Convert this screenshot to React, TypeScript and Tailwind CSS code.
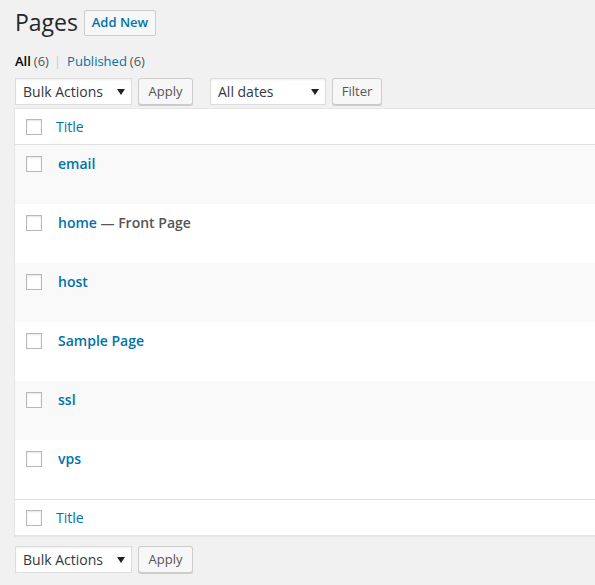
const pages = [
  { title: "email" },
  { title: "home", state: "Front Page" },
  { title: "host" },
  { title: "Sample Page" },
  { title: "ssl" },
  { title: "vps" },
];

function Checkbox() {
  return (
    <span className="block w-[16px] h-[16px] border border-[#b4b9be] bg-white shadow-[inset_0_1px_2px_rgba(0,0,0,0.1)]" />
  );
}

function Select({ label, width }: { label: string; width: string }) {
  return (
    <div
      className={`${width} h-[27px] flex items-center justify-between pl-[7px] pr-[6px] bg-white border border-[#ddd] shadow-[inset_0_1px_2px_rgba(0,0,0,0.07)] text-[14px] text-[#32373c]`}
    >
      <span>{label}</span>
      <svg width="8" height="6" viewBox="0 0 8 6">
        <path d="M0 0 L8 0 L4 6 Z" fill="#222" />
      </svg>
    </div>
  );
}

function Button({ label, width }: { label: string; width: string }) {
  return (
    <button
      className={`${width} h-[27px] flex items-center justify-center bg-[#f7f7f7] border border-[#ccc] rounded-[3px] shadow-[0_1px_0_#ccc] text-[13px] text-[#555]`}
    >
      {label}
    </button>
  );
}

export default function App() {
  return (
    <div className="w-[595px] h-[585px] overflow-hidden bg-[#f1f1f1] pl-[15px] pt-[8px] font-['Open_Sans',sans-serif] text-[#444]">
      {/* Heading */}
      <div className="flex items-center gap-[6px]">
        <h1 className="text-[23px] leading-[29px] text-[#23282d]">Pages</h1>
        <button className="h-[26px] w-[72px] flex items-center justify-center bg-[#f7f7f7] border border-[#ccc] rounded-[2px] text-[13px] font-semibold text-[#0073aa]">
          Add New
        </button>
      </div>

      {/* Views */}
      <div className="mt-[14px] text-[13px] leading-[20px] flex items-center">
        <span className="font-semibold text-black">All</span>
        <span className="ml-[3px] text-[#555]">(6)</span>
        <span className="ml-[5px] mr-[6px] text-[#ccc]">|</span>
        <span className="text-[#0073aa]">Published</span>
        <span className="ml-[3px] text-[#555]">(6)</span>
      </div>

      {/* Top tablenav */}
      <div className="mt-[7px] flex items-center">
        <Select label="Bulk Actions" width="w-[117px]" />
        <div className="ml-[6px]">
          <Button label="Apply" width="w-[55px]" />
        </div>
        <div className="ml-[17px]">
          <Select label="All dates" width="w-[116px]" />
        </div>
        <div className="ml-[6px]">
          <Button label="Filter" width="w-[50px]" />
        </div>
      </div>

      {/* Table */}
      <div className="mt-[3px] ml-[-1px] w-[600px] bg-white border border-[#e5e5e5] shadow-[0_1px_1px_rgba(0,0,0,0.04)]">
        <div className="h-[36px] flex items-center border-b border-[#e1e1e1]">
          <div className="pl-[11px] w-[41px]">
            <Checkbox />
          </div>
          <span className="text-[14px] text-[#0073aa]">Title</span>
        </div>
        {pages.map((p, i) => (
          <div
            key={p.title}
            className={`h-[59px] flex items-start ${i % 2 === 0 ? "bg-[#f9f9f9]" : "bg-white"}`}
          >
            <div className="pl-[11px] pt-[11px] w-[43px]">
              <Checkbox />
            </div>
            <div className="pt-[8px] text-[14px] leading-[21px] font-semibold">
              <span className="text-[#0073aa]">{p.title}</span>
              {p.state && <span className="text-[#555]"> — {p.state}</span>}
            </div>
          </div>
        ))}
        <div className="h-[36px] flex items-center border-t border-[#e1e1e1]">
          <div className="pl-[11px] w-[41px]">
            <Checkbox />
          </div>
          <span className="text-[14px] text-[#0073aa]">Title</span>
        </div>
      </div>

      {/* Bottom tablenav */}
      <div className="mt-[10px] flex items-center">
        <Select label="Bulk Actions" width="w-[117px]" />
        <div className="ml-[6px]">
          <Button label="Apply" width="w-[55px]" />
        </div>
      </div>
    </div>
  );
}
